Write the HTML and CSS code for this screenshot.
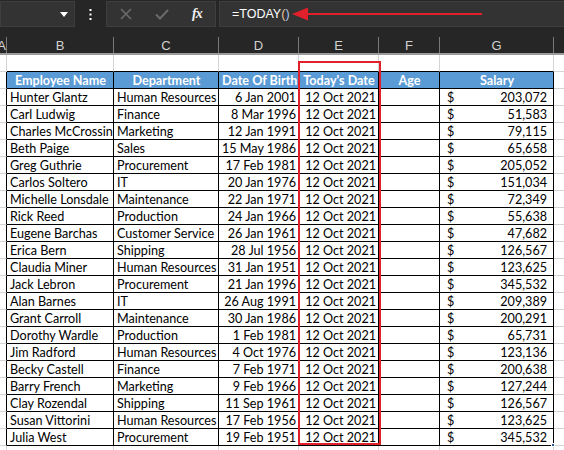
FILE: index.html
```html
<!DOCTYPE html>
<html>
<head>
<meta charset="utf-8">
<link rel="stylesheet" href="styles.css">
</head>
<body>
<div class="app">
  <div class="fbar">
    <div class="namebox"><svg class="caret" width="8" height="5" viewBox="0 0 8 5"><path d="M0 0H8L4 5Z" fill="#fff"/></svg></div>
    <div class="dots"><svg width="3" height="11" viewBox="0 0 3 11"><rect x="0.5" y="0" width="2" height="2" fill="#fff"/><rect x="0.5" y="4.5" width="2" height="2" fill="#fff"/><rect x="0.5" y="9" width="2" height="2" fill="#fff"/></svg></div>
    <div class="btns">
      <svg class="ico" width="12" height="12" viewBox="0 0 12 12"><path d="M1 1L11 11M11 1L1 11" stroke="#6b6b6b" stroke-width="1.6"/></svg>
      <svg class="ico" width="14" height="11" viewBox="0 0 14 11"><path d="M1 5.5L5 9.5L13 1" stroke="#6b6b6b" stroke-width="2" fill="none"/></svg>
      <span class="fx">fx</span>
    </div>
    <div class="formula">=TODAY<span class="p1">(</span><span class="p2">)</span></div>
  </div>
  <div class="colhdr">
    <div class="ch a">A</div><div class="ch">B</div><div class="ch">C</div><div class="ch">D</div><div class="ch">E</div><div class="ch">F</div><div class="ch">G</div><div class="ch h"></div>
  </div>
  <div class="sheet" id="sheet">
    <div class="row pre"><div class="c a"></div><div class="c"></div><div class="c"></div><div class="c"></div><div class="c"></div><div class="c"></div><div class="c"></div><div class="c h"></div></div>
    <div class="row t head"><div class="c a"></div><div class="c">Employee Name</div><div class="c">Department</div><div class="c">Date Of Birth</div><div class="c">Today's Date</div><div class="c">Age</div><div class="c">Salary</div><div class="c h"></div></div>
  </div>
  <div class="redbox"></div>
  <svg class="arrow" width="200" height="16" viewBox="0 0 200 16"><path d="M14 8H190" stroke="#e0202a" stroke-width="2"/><path d="M0 8L16 1.5V14.5Z" fill="#e0202a"/></svg>
</div>
<script src="app.js"></script>
</body>
</html>
```

FILE: app.js
```js
var data = [
["Hunter Glantz","Human Resources","6 Jan 2001","203,072"],
["Carl Ludwig","Finance","8 Mar 1996","51,583"],
["Charles McCrossin","Marketing","12 Jan 1991","79,115"],
["Beth Paige","Sales","15 May 1986","65,658"],
["Greg Guthrie","Procurement","17 Feb 1981","205,052"],
["Carlos Soltero","IT","20 Jan 1976","151,034"],
["Michelle Lonsdale","Maintenance","22 Jan 1971","72,349"],
["Rick Reed","Production","24 Jan 1966","55,638"],
["Eugene Barchas","Customer Service","26 Jan 1961","47,682"],
["Erica Bern","Shipping","28 Jul 1956","126,567"],
["Claudia Miner","Human Resources","31 Jan 1951","123,625"],
["Jack Lebron","Procurement","21 Jan 1996","345,532"],
["Alan Barnes","IT","26 Aug 1991","209,389"],
["Grant Carroll","Maintenance","30 Jan 1986","200,291"],
["Dorothy Wardle","Production","1 Feb 1981","65,731"],
["Jim Radford","Human Resources","4 Oct 1976","123,136"],
["Becky Castell","Finance","7 Feb 1971","200,638"],
["Barry French","Marketing","9 Feb 1966","127,244"],
["Clay Rozendal","Shipping","11 Sep 1961","126,567"],
["Susan Vittorini","Human Resources","17 Feb 1956","123,625"],
["Julia West","Procurement","19 Feb 1951","345,532"]
];
var sheet = document.getElementById("sheet");
var html = "";
data.forEach(function (r, i) {
  var last = i === data.length - 1;
  html += '<div class="row t body">' +
    '<div class="c a"></div>' +
    '<div class="c">' + r[0] + '</div>' +
    '<div class="c">' + r[1] + '</div>' +
    '<div class="c num">' + r[2] + '</div>' +
    '<div class="c num">12 Oct 2021</div>' +
    '<div class="c"></div>' +
    '<div class="c sal"><span>$</span><span>' + r[3] + '</span>' + (last ? '<i class="handle"></i>' : '') + '</div>' +
    '<div class="c h"></div></div>';
});
html += '<div class="row"><div class="c a"></div><div class="c"></div><div class="c"></div><div class="c"></div><div class="c"></div><div class="c"></div><div class="c"></div><div class="c h"></div></div>';
sheet.insertAdjacentHTML("beforeend", html);
```

FILE: styles.css
```css
* { box-sizing: border-box; }
html, body { margin: 0; padding: 0; background: #262626; }
.app { position: relative; width: 564px; height: 450px; overflow: hidden; background: #262626; }

.fbar { display: flex; align-items: stretch; height: 28px; padding-top: 1px; padding-bottom: 1px; }
.namebox { width: 75px; background: #333333; border: 1px solid #3e3e3e; display: flex; align-items: center; justify-content: flex-end; padding-right: 6px; }
.dots { width: 31px; display: flex; align-items: center; justify-content: center; }
.btns { width: 110px; background: #333333; border: 1px solid #3e3e3e; display: flex; align-items: center; padding-left: 13px; gap: 0; }
.btns .ico:first-child { margin-right: 23px; }
.btns .ico:nth-child(2) { margin-right: 23px; }
.fx { font-family: "Liberation Serif", serif; font-style: italic; font-weight: bold; color: #f0f0f0; font-size: 14px; letter-spacing: -1px; }
.formula { flex: 1; margin-left: 3px; background: #333333; border: 1px solid #3e3e3e; border-right: none; color: #ffffff; font-family: "Liberation Sans", sans-serif; font-size: 12.5px; display: flex; align-items: center; padding-left: 12px; }
.p1 { color: #e9c89c; }
.p2 { color: #a9cdf0; }

.colhdr { display: grid; grid-template-columns: 7px 107px 105px 80px 80px 61px 114px 10px; margin-top: 9px; height: 18px; border-bottom: 2px solid #9b9b9b; }
.ch { color: #d2d2d2; font-family: "Liberation Sans", sans-serif; font-size: 13px; text-align: center; line-height: 17px; border-right: 1px solid #7a7a7a; overflow: hidden; }
.ch.a { text-align: right; padding-right: 0; text-indent: -6px; }
.ch.h { border-right: none; }

.sheet { background: #ffffff; }
.row { display: grid; grid-template-columns: 7px 107px 105px 80px 80px 61px 114px 10px; height: 17px; }
.c { height: 17px; border-right: 1px solid #d4d4d4; border-bottom: 1px solid #d4d4d4; font-family: "Lato", sans-serif; font-size: 12.6px; line-height: 17px; color: #000; padding: 0 2px 0 3px; white-space: nowrap; overflow: hidden; }
.c.h { border-right: none; }
.row.pre .c:not(.a):not(.h) { border-bottom-color: #000; }
.row.t .c:not(.h) { border-right-color: #000; }
.row.t .c:not(.a):not(.h) { border-bottom-color: #000; }
.row.head .c:not(.a):not(.h) { background: #5b9bd5; color: #ffffff; font-weight: bold; text-align: center; }
.num { text-align: right; }
.sal { display: flex; justify-content: space-between; padding: 0 6px 0 7px; position: relative; overflow: visible; }
.handle { position: absolute; right: -2px; bottom: -2px; width: 4px; height: 4px; background: #2f5597; border: 1px solid #fff; }

.redbox { position: absolute; left: 298px; top: 61px; width: 83px; height: 384px; border: 2px solid #e0202a; pointer-events: none; }
.arrow { position: absolute; left: 292px; top: 6px; }
```
